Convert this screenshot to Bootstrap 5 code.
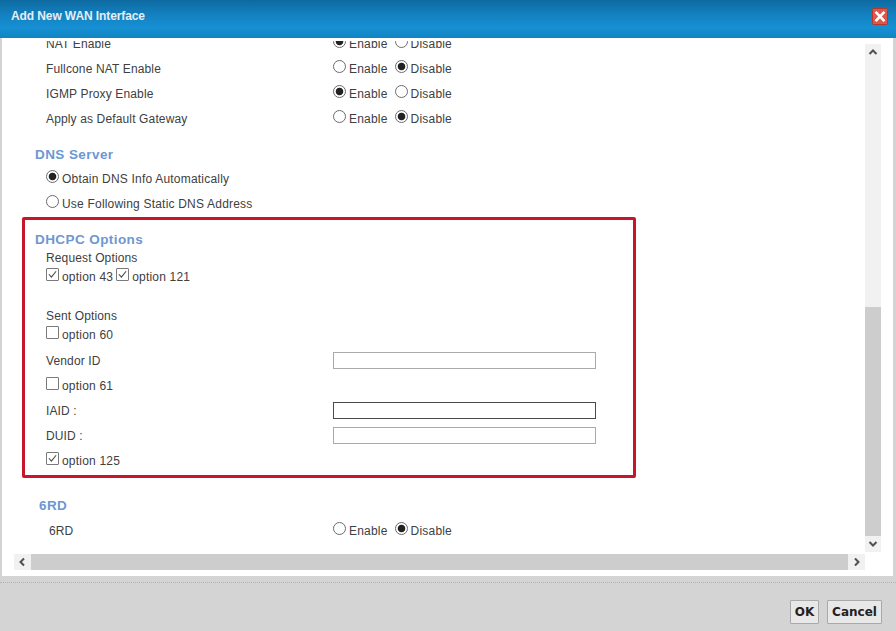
<!DOCTYPE html>
<html lang="en">
<head>
<meta charset="utf-8">
<title>Add New WAN Interface</title>
<link href="https://cdn.jsdelivr.net/npm/bootstrap@5.3.0/dist/css/bootstrap.min.css" rel="stylesheet">
<style>
html,body{height:100%;overflow:hidden;}
body{font-family:"Liberation Sans",Arial,sans-serif;font-size:12px;color:#404040;background:#d4d4d4;letter-spacing:.14px;}
label{letter-spacing:.2px;}
.dlg{width:896px;height:631px;}
.dlg-head{height:38px;padding:0 8px 0 11px;background:linear-gradient(180deg,#0d6aa0 0%,#137fbd 35%,#1690d4 72%,#1184c2 100%);}
.dlg-title{color:#e4eef6;font-weight:700;font-size:12px;letter-spacing:-.1px;margin-top:-7px;}
.dlg-close{width:16px;height:17px;margin-top:-5px;display:block;}
.dlg-pane{height:538px;margin:0 3px 0 2px;background:#fff;}
.pane-main{height:514px;}
.pane-clip{width:863px;overflow:hidden;margin-top:3px;}
.pane-inner{margin-top:-10px;}
.opt-row{height:25px;padding-left:44px;}
.opt-label{width:287px;flex:none;}
.opt-row.wide-6rd{padding-left:47px;}
.opt-row.wide-6rd .opt-label{width:284px;}
.opt-head{color:#6d97d3;font-weight:700;font-size:13.5px;letter-spacing:.42px;height:25px;padding:3px 0 0 33px;margin-top:10px;}
.opt-head.at-6rd{padding:0 0 0 37px;margin-top:16px;height:24px;}
.red-frame{width:614px;height:261px;margin:1px 0 0 20px;border:3px solid #c7152c;border-radius:2px;padding-top:5px;}
.red-frame .opt-head{padding:7px 0 0 10px;height:23px;margin-top:0;}
.red-frame .opt-row{padding-left:21px;height:25px;}
.red-frame .thin{height:19px;}
.red-frame .after-gap{margin-bottom:4px;}
.red-frame .spacer{height:20px;}
.ui-radio,.ui-check{appearance:none;-webkit-appearance:none;margin:-5px 3px 0 0;flex:none;background-color:#fff;border:1px solid #6b6b6b;display:inline-block;vertical-align:middle;}
.ui-radio{width:13px;height:13px;border-radius:50%;}
.ui-radio:checked{background:radial-gradient(circle,#222 0,#222 3.4px,#fff 4.2px);}
.ui-check{width:13px;height:13px;margin:-6px 3px 0 0;border-color:#7a7a7a;border-radius:1px;}
.ui-check:checked{background:#fff url("data:image/svg+xml,%3Csvg xmlns='http://www.w3.org/2000/svg' viewBox='0 0 13 13'%3E%3Cpath d='M2.2 6.2 5.2 9.6 10.8 2.6' fill='none' stroke='%23444' stroke-width='1.2'/%3E%3C/svg%3E") center/100% no-repeat;}
.pair{margin-right:7px;}
.check-gap{margin-right:3px;}
.ui-text{width:263px;height:17px;border:1px solid #aaa;background:#fff;display:block;padding:0 2px;border-radius:0;outline:0;}
.ui-text.is-focus{border-color:#4a4a4a;}
.bar-v{width:16px;margin-top:6px;background:#f1f1f1;}
.bar-v .thumb{height:229px;background:#cdcdcd;margin-top:auto;}
.arrow-box{height:16px;color:#505050;}
.arrow-box svg{display:block;}
.bar-h{height:16px;margin:2px 0 0 12px;width:851px;background:#f1f1f1;}
.bar-h .arrow-box{width:17px;flex:none;}
.bar-h .thumb{flex:1;background:#cdcdcd;}
.dlg-foot-line{border-top:1px dotted #b4b4b4;height:0;margin-top:6px;}
.foot-row{padding:17px 14px 0 0;}
.foot-btn{--bs-btn-padding-x:0;--bs-btn-padding-y:0;height:24px;font-family:"DejaVu Sans",sans-serif;font-weight:700;font-size:12px;letter-spacing:0;color:#222;background:#e8e8e8;border:1px solid #a9a9a9;border-radius:1px;line-height:22px;}
.foot-ok{width:29px;margin-right:8px;}
.foot-cancel{width:55px;}
</style>
</head>
<body>
<div class="dlg d-flex flex-column">
  <div class="dlg-head d-flex align-items-center justify-content-between">
    <div class="dlg-title">Add New WAN Interface</div>
    <svg class="dlg-close" viewBox="0 0 16 17" aria-label="Close"><rect x=".5" y=".5" width="15" height="16" rx="1" fill="#e0574a" stroke="#b3392f"/><path d="M3.6 3.8 12.4 13.2M12.4 3.8 3.6 13.2" stroke="#fff" stroke-width="2.6"/></svg>
  </div>
  <div class="dlg-pane">
    <div class="pane-main d-flex">
      <div class="pane-clip">
        <div class="pane-inner">
          <div class="opt-row d-flex align-items-center"><div class="opt-label">NAT Enable</div><label class="pair"><input class="ui-radio" type="radio" name="a" checked>Enable</label><label><input class="ui-radio" type="radio" name="a">Disable</label></div>
          <div class="opt-row d-flex align-items-center"><div class="opt-label">Fullcone NAT Enable</div><label class="pair"><input class="ui-radio" type="radio" name="b">Enable</label><label><input class="ui-radio" type="radio" name="b" checked>Disable</label></div>
          <div class="opt-row d-flex align-items-center"><div class="opt-label">IGMP Proxy Enable</div><label class="pair"><input class="ui-radio" type="radio" name="c" checked>Enable</label><label><input class="ui-radio" type="radio" name="c">Disable</label></div>
          <div class="opt-row d-flex align-items-center"><div class="opt-label">Apply as Default Gateway</div><label class="pair"><input class="ui-radio" type="radio" name="d">Enable</label><label><input class="ui-radio" type="radio" name="d" checked>Disable</label></div>
          <div class="opt-head d-flex align-items-center">DNS Server</div>
          <div class="opt-row d-flex align-items-center"><label><input class="ui-radio" type="radio" name="e" checked>Obtain DNS Info Automatically</label></div>
          <div class="opt-row d-flex align-items-center"><label><input class="ui-radio" type="radio" name="e">Use Following Static DNS Address</label></div>
          <div class="red-frame">
            <div class="opt-head d-flex align-items-center">DHCPC Options</div>
            <div class="opt-row thin d-flex align-items-center">Request Options</div>
            <div class="opt-row thin d-flex align-items-center"><label class="check-gap"><input class="ui-check" type="checkbox" checked>option 43</label><label><input class="ui-check" type="checkbox" checked>option 121</label></div>
            <div class="spacer"></div>
            <div class="opt-row thin d-flex align-items-center">Sent Options</div>
            <div class="opt-row thin after-gap d-flex align-items-center"><label><input class="ui-check" type="checkbox">option 60</label></div>
            <div class="opt-row d-flex align-items-center"><div class="opt-label">Vendor ID</div><input class="ui-text" type="text" aria-label="Vendor ID"></div>
            <div class="opt-row d-flex align-items-center"><label><input class="ui-check" type="checkbox">option 61</label></div>
            <div class="opt-row d-flex align-items-center"><div class="opt-label">IAID :</div><input class="ui-text is-focus" type="text" aria-label="IAID"></div>
            <div class="opt-row d-flex align-items-center"><div class="opt-label">DUID :</div><input class="ui-text" type="text" aria-label="DUID"></div>
            <div class="opt-row d-flex align-items-center"><label><input class="ui-check" type="checkbox" checked>option 125</label></div>
          </div>
          <div class="opt-head at-6rd d-flex align-items-center">6RD</div>
          <div class="opt-row wide-6rd d-flex align-items-center"><div class="opt-label">6RD</div><label class="pair"><input class="ui-radio" type="radio" name="f">Enable</label><label><input class="ui-radio" type="radio" name="f" checked>Disable</label></div>
        </div>
      </div>
      <div class="bar-v d-flex flex-column">
        <div class="arrow-box"><svg width="16" height="16" viewBox="0 0 16 16"><path d="M4.5 10 8 6.5 11.5 10" fill="none" stroke="currentColor" stroke-width="2"/></svg></div>
        <div class="thumb"></div>
        <div class="arrow-box"><svg width="16" height="16" viewBox="0 0 16 16"><path d="M4.5 6 8 9.5 11.5 6" fill="none" stroke="currentColor" stroke-width="2"/></svg></div>
      </div>
    </div>
    <div class="bar-h d-flex">
      <div class="arrow-box"><svg width="17" height="16" viewBox="0 0 17 16"><path d="M10 4.5 6.5 8 10 11.5" fill="none" stroke="currentColor" stroke-width="2"/></svg></div>
      <div class="thumb"></div>
      <div class="arrow-box"><svg width="17" height="16" viewBox="0 0 17 16"><path d="M7 4.5 10.5 8 7 11.5" fill="none" stroke="currentColor" stroke-width="2"/></svg></div>
    </div>
  </div>
  <div class="dlg-foot-line"></div>
  <div class="d-flex justify-content-end foot-row">
    <button type="button" class="btn foot-btn foot-ok">OK</button>
    <button type="button" class="btn foot-btn foot-cancel">Cancel</button>
  </div>
</div>
</body>
</html>
